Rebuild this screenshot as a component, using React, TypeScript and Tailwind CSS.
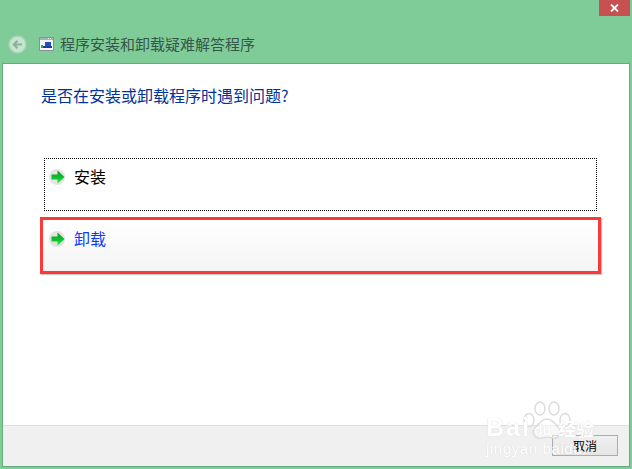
const cjk = { fontFamily: '"Noto Sans CJK SC", "Liberation Sans", sans-serif' };

function Arrow({ className }: { className: string }) {
  return (
    <svg width="18" height="18" viewBox="0 0 18 18" className={`shrink-0 ${className}`}>
      <defs>
        <linearGradient id="arrowFill" x1="0" y1="0" x2="0" y2="1">
          <stop offset="0" stopColor="#0a9a2c" />
          <stop offset="0.55" stopColor="#0ec02c" />
          <stop offset="1" stopColor="#35e84a" />
        </linearGradient>
      </defs>
      <circle cx="8" cy="9" r="8" fill="#d2d2d2" opacity="0.6" />
      <path d="M2.500 6.500h6V2.500L15.500 9l-7 6.500v-4h-6z" fill="url(#arrowFill)" />
    </svg>
  );
}

function Watermark() {
  return (
    <div
      className="absolute left-[484px] top-[400px] w-[145px] h-[69px] pointer-events-none text-white [text-shadow:0_0_1px_#d0d0d0]"
      style={{ fontFamily: '"Liberation Sans", sans-serif' }}
    >
      <svg width="56" height="42" viewBox="0 0 56 42" className="absolute left-[36px] top-0" fill="#ffffff" fillOpacity="0.5" stroke="#dcdcdc" strokeWidth="1.500">
        <ellipse cx="9" cy="20" rx="5" ry="6.500" />
        <ellipse cx="20" cy="8.500" rx="5" ry="6.500" />
        <ellipse cx="34" cy="8.500" rx="5" ry="6.500" />
        <ellipse cx="45" cy="20" rx="5" ry="6.500" />
        <path d="M27 19c6 0 8 5 12 9 4 5 0 11-6 10-4-1-8-1-12 0-6 1-10-5-6-10 4-4 6-9 12-9z" />
      </svg>
      <div className="absolute left-[2px] top-[15px] text-[25px] font-bold leading-none tracking-[2px]">Bai</div>
      <div className="absolute left-[46px] top-[23px] w-[25px] h-[15px] text-[14px] font-bold leading-[15px] text-center">du</div>
      <div className="absolute left-[74px] top-[19px] text-[18px] font-bold leading-none" style={cjk}>经验</div>
      <div className="absolute left-[2px] top-[41px] text-[15px] leading-none tracking-[0.6px]">jingyan.baidu.</div>
    </div>
  );
}

export default function App() {
  return (
    <div className="relative w-[632px] h-[469px] overflow-hidden bg-[#7fcc98] flex flex-col" style={cjk}>
      <div className="h-[64px] shrink-0 flex flex-col">
        <div className="flex justify-end pr-[2px]">
          <div className="w-[31px] h-[16px] bg-[#c75050] flex items-center justify-center">
            <svg width="9" height="8" viewBox="0 0 9 8">
              <path d="M1 .5 4.500 4 8 .5M1 7.500 4.500 4 8 7.500" stroke="#ffffff" strokeWidth="1.800" fill="none" />
            </svg>
          </div>
        </div>
        <div className="flex items-center pl-[8px] mt-[19px] h-[18px]">
          <svg width="19" height="19" viewBox="0 0 19 19" className="shrink-0">
            <circle cx="9.500" cy="9.500" r="8.500" fill="#c4e6cf" stroke="#a9cfb6" strokeWidth="1.400" />
            <path d="M14 9.500H6M9.500 5.800 5.800 9.500l3.700 3.700" stroke="#8fb09b" strokeWidth="2.200" fill="none" />
          </svg>
          <svg width="15" height="14" viewBox="0 0 15 14" className="ml-[12px] shrink-0">
            <rect x="0.500" y="0.500" width="14" height="13" fill="#f4f6f8" stroke="#8a8f9a" />
            <rect x="1" y="1" width="13" height="2" fill="#a9b0ba" />
            <rect x="9" y="1" width="1" height="1" fill="#ffffff" />
            <rect x="11" y="1" width="1" height="1" fill="#ffffff" />
            <rect x="6" y="5" width="6" height="5" fill="#1c4fc4" />
            <rect x="4" y="9" width="9" height="2" fill="#1c3f94" />
            <rect x="2" y="8" width="2" height="3" fill="#2fae4b" />
          </svg>
          <span className="ml-[6px] text-[15px] leading-[18px] text-[#35574a] whitespace-nowrap">程序安装和卸载疑难解答程序</span>
        </div>
      </div>

      <div className="mx-[3px] mb-[3px] flex-1 flex flex-col bg-white outline outline-1 outline-[#66ad7e]">
        <div className="flex-1 flex flex-col pt-[20px]">
          <div className="pl-[38px] text-[16px] leading-[22px] text-[#003399] whitespace-nowrap">是否在安装或卸载程序时遇到问题?</div>
          <div className="mt-[52px] ml-[41px] w-[553px] h-[53px] border border-dotted border-black flex items-start pl-[4px] pt-[7px] gap-[7px]">
            <Arrow className="mt-[2px]" />
            <span className="text-[16px] leading-[20px] text-black">安装</span>
          </div>
          <div className="mt-[6px] ml-[37px] w-[561px] h-[57px] border-[3px] border-[#fb3939] bg-gradient-to-b from-white to-[#f4f4f4] shadow-[1px_1px_1px_#c8c8c8] flex items-start pl-[6px] pt-[7px] gap-[7px]">
            <Arrow className="mt-[3px]" />
            <span className="text-[16px] leading-[22px] text-[#0a3cff]">卸载</span>
          </div>
        </div>
        <div className="h-[41px] shrink-0 bg-[#f0f0f0] border-t border-[#dfdfdf] flex items-start justify-end pt-[9px] pr-[11px]">
          <div className="w-[66px] h-[21px] border border-[#acacac] bg-gradient-to-b from-[#f0f0f0] to-[#e5e5e5] flex items-center justify-center text-[12px] text-black leading-none">取消</div>
        </div>
      </div>
      <Watermark />
    </div>
  );
}
